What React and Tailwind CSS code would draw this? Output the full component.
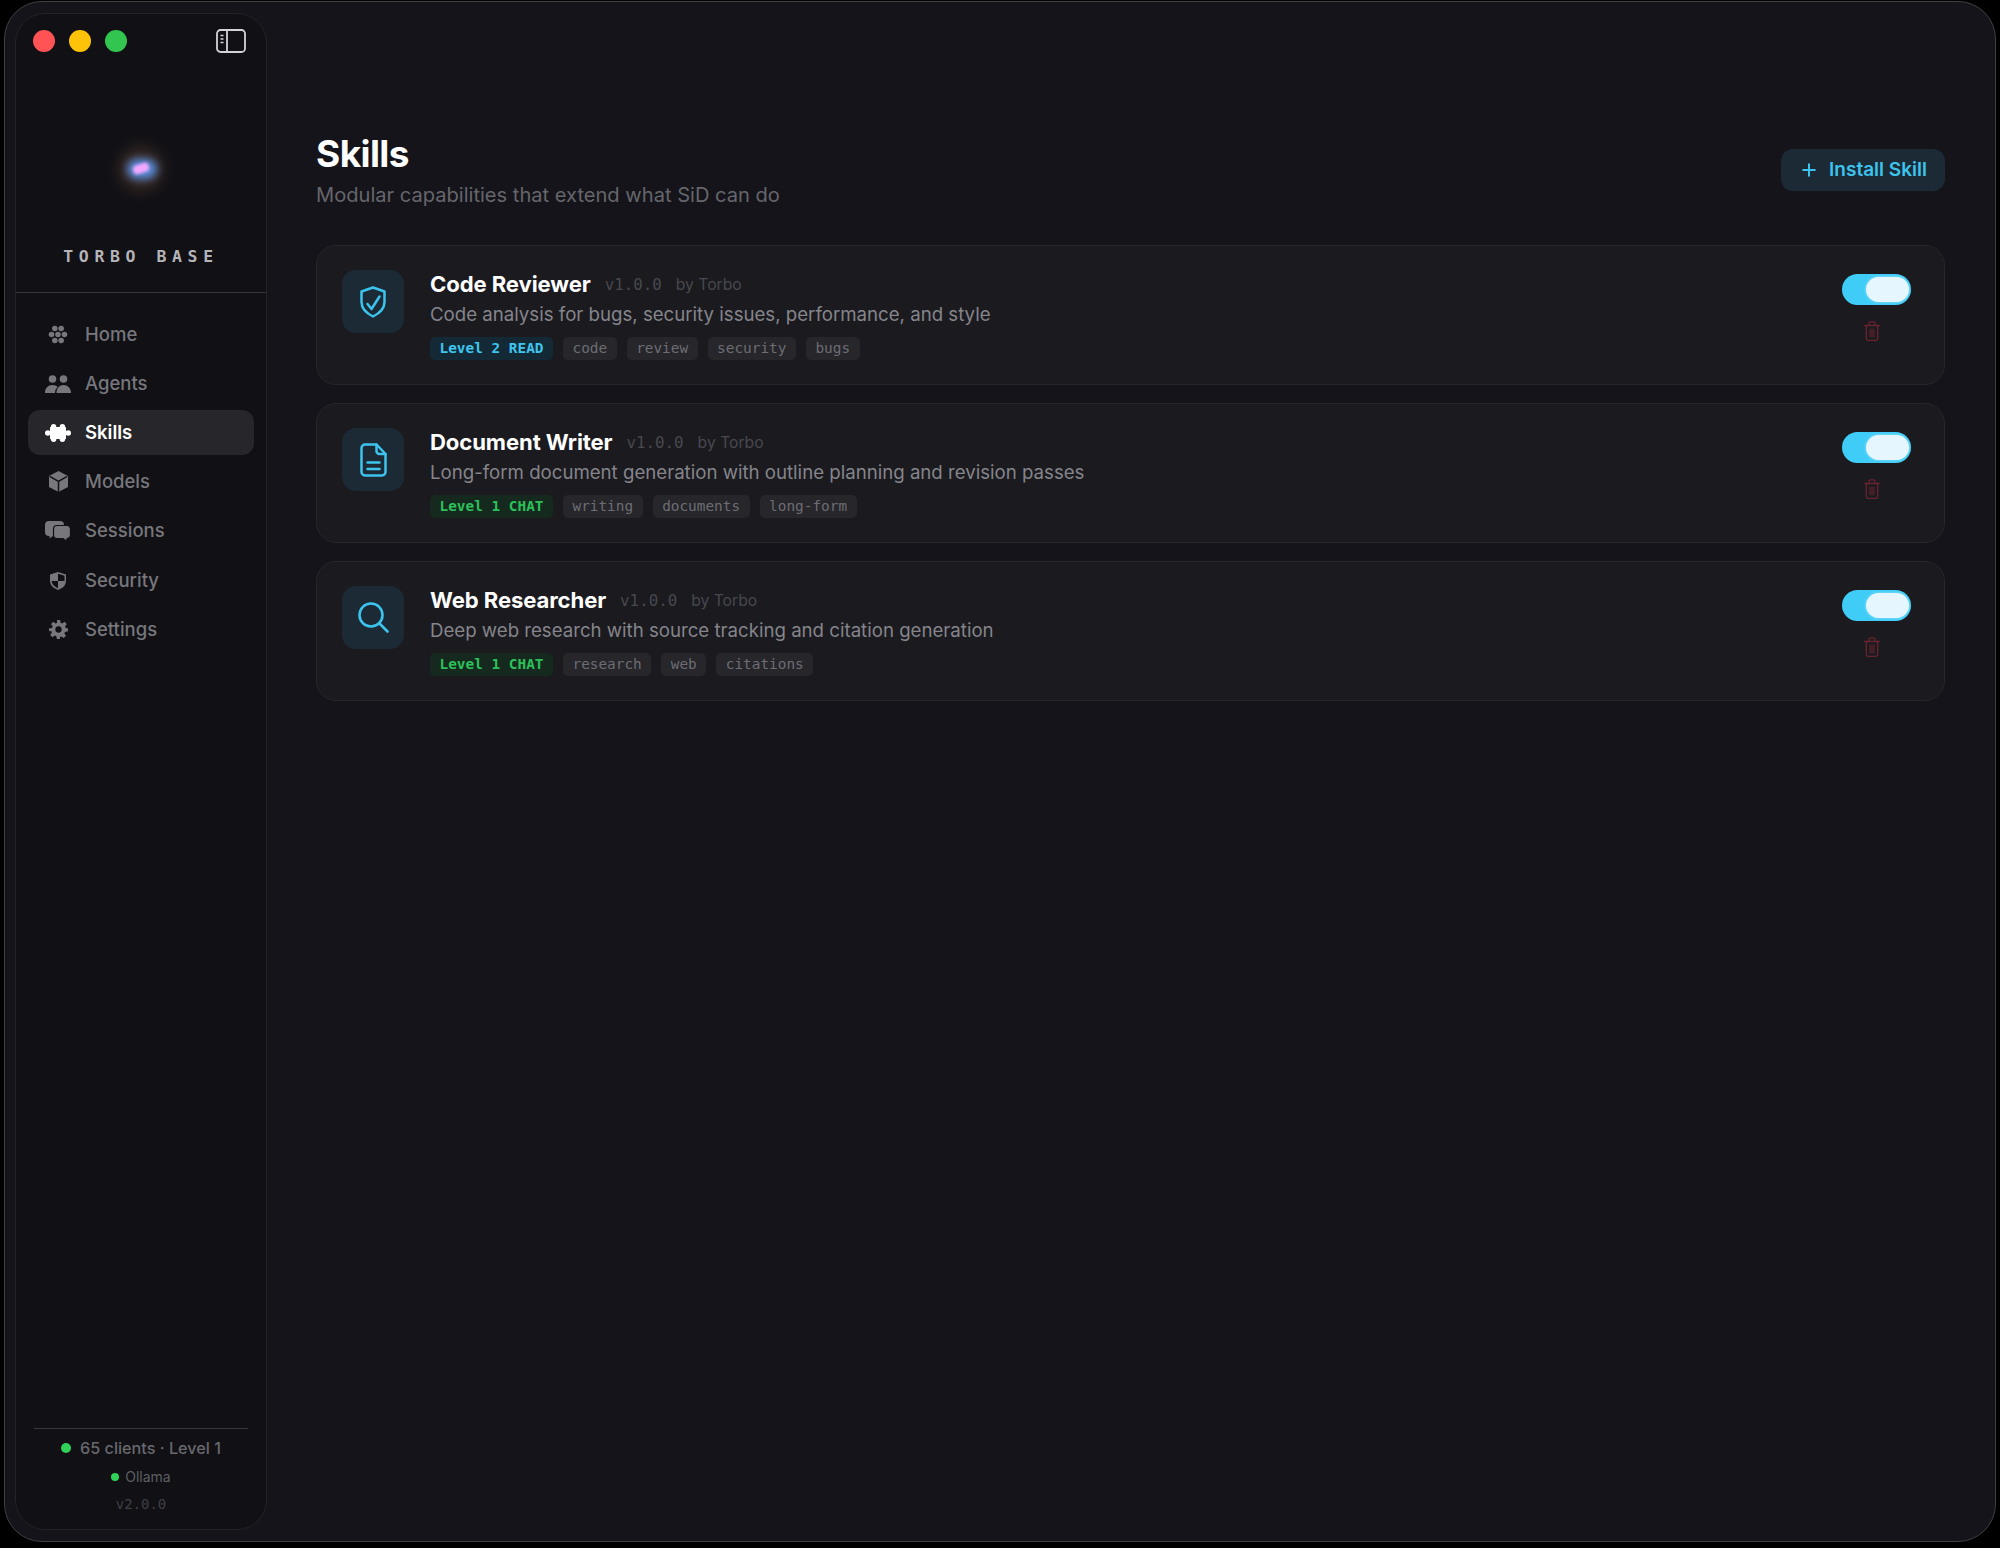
import React from "react";
import { Plus } from "lucide-react";

const HomeIcon = ({ className }) => (
  <svg viewBox="0 0 24 24" className={className} fill="currentColor">
    <circle cx="8" cy="4.5" r="3.5" /><circle cx="16" cy="4.5" r="3.5" />
    <circle cx="3.8" cy="12" r="3.5" /><circle cx="12" cy="12" r="3.5" /><circle cx="20.2" cy="12" r="3.5" />
    <circle cx="8" cy="19.5" r="3.5" /><circle cx="16" cy="19.5" r="3.5" />
  </svg>
);
const AgentsIcon = ({ className }) => (
  <svg viewBox="0 0 26 18" className={className} fill="currentColor">
    <circle cx="7.5" cy="4" r="3.8" /><circle cx="18.5" cy="4" r="3.8" />
    <path d="M0 18c0-5 3-8 7.5-8 2.2 0 4 .8 5.3 2.1C11 13.6 10 15.6 10 18H0z" />
    <path d="M11.5 18c0-5 3-8 7-8s7.5 3 7.5 8H11.5z" />
  </svg>
);
const PuzzleIcon = ({ className }) => (
  <svg viewBox="0 0 26 18" className={className} fill="currentColor">
    <rect x="5" y="3" width="16" height="12" rx="0.5" />
    <circle cx="8.6" cy="2.7" r="2.7" /><circle cx="17.4" cy="2.7" r="2.7" />
    <circle cx="8.6" cy="15.3" r="2.7" /><circle cx="17.4" cy="15.3" r="2.7" />
    <circle cx="2.8" cy="9" r="2.8" /><circle cx="23.2" cy="9" r="2.8" />
  </svg>
);
const CubeIcon = ({ className }) => (
  <svg viewBox="0 0 19 21" className={className}>
    <path d="M9.5 0 19 5v11l-9.5 5L0 16V5z" fill="currentColor" />
    <path d="M.8 5.4 9.5 10.3l8.7-4.9M9.5 10.3V21" fill="none" stroke="#101015" strokeWidth="1.5" />
  </svg>
);
const SessionsIcon = ({ className }) => (
  <svg viewBox="0 0 26 21" className={className}>
    <path d="M4 0h11a4 4 0 0 1 4 4v7a4 4 0 0 1-4 4H8l-3.5 2.5V15H4a4 4 0 0 1-4-4V4a4 4 0 0 1 4-4z" fill="currentColor" />
    <path d="M12 4.5h10a3.5 3.5 0 0 1 3.5 3.5v6a3.5 3.5 0 0 1-3.5 3.5v3l-4-3h-6A3.5 3.5 0 0 1 8.5 14V8A3.5 3.5 0 0 1 12 4.5z" fill="currentColor" stroke="#101015" strokeWidth="1.2" />
  </svg>
);
const SecurityIcon = ({ className }) => (
  <svg viewBox="0 0 16 18" className={className}>
    <path d="M8 0l8 2.5V9c0 4.5-4 7.5-8 9-4-1.5-8-4.5-8-9V2.5z" fill="currentColor" />
    <path d="M8 1.8 14.5 3.7V9H8zM8 9H1.6C2 12.5 5 15 8 16.3z" fill="#101015" />
  </svg>
);
const GearIcon = ({ className }) => (
  <svg viewBox="0 0 24 24" className={className} fill="currentColor">
    <path fillRule="evenodd" d="M10 0h4l.7 3.5 1.9.8 3-2 2.8 2.8-2 3 .8 1.9L24 10.7v3.6l-3.8.7-.8 1.9 2 3-2.8 2.8-3-2-1.900.8L14 24h-4l-.7-3.5-1.9-.8-3 2-2.800-2.800 2-3-.8-1.900L0 14.300v-3.600L3.800 10l.8-1.900-2-3 2.800-2.800 3 2 1.900-.8zM12 8a4 4 0 1 0 0 8 4 4 0 0 0 0-8z" />
  </svg>
);
const PanelIcon = () => (
  <svg viewBox="0 0 30 24" className="w-[30px] h-[24px]" fill="none" stroke="#d4d4d8" strokeWidth="1.8">
    <rect x="1" y="1" width="28" height="22" rx="3.5" />
    <path d="M11 1v22" />
    <path d="M4.5 6.5h3M4.5 10h3M4.5 13.5h3" strokeWidth="1.5" />
  </svg>
);
const ShieldIcon = () => (
  <svg viewBox="0 0 26 32" className="w-[26px] h-[32px]" fill="none" stroke="#3cc4ee" strokeWidth="2.5" strokeLinecap="round" strokeLinejoin="round">
    <path d="M13 1.5 24.5 5.5V16c0 7-5.5 11.5-11.5 14.500C7 27.500 1.500 23 1.500 16V5.500z" />
    <path d="M7.500 18l4 5 8-12.500" />
  </svg>
);
const DocIcon = () => (
  <svg viewBox="0 0 27 34" className="w-[27px] h-[34px]" fill="none" stroke="#3cc4ee" strokeWidth="2.5" strokeLinecap="round" strokeLinejoin="round">
    <path d="M5 1.5h11.5L25.5 11v18a3.5 3.5 0 0 1-3.5 3.5H5A3.5 3.5 0 0 1 1.5 29V5A3.5 3.5 0 0 1 5 1.5z" />
    <path d="M16.5 1.5V8a3 3 0 0 0 3 3h6" />
    <path d="M7.5 19.5h12M7.5 26h12" />
  </svg>
);
const SearchIcon = () => (
  <svg viewBox="0 0 31 31" className="w-[31px] h-[31px]" fill="none" stroke="#3cc4ee" strokeWidth="2.6" strokeLinecap="round">
    <circle cx="13" cy="13" r="11.5" />
    <path d="M21.5 21.5 29.5 29.5" />
  </svg>
);
const TrashIcon = () => (
  <svg viewBox="0 0 16 20" className="w-[16px] h-[20px] mr-[10px] mt-[16px]" fill="none" stroke="#6a2430" strokeWidth="1.3" strokeLinecap="round">
    <path d="M.8 4.5h14.4" />
    <path d="M5 4.5V2.3A1.5 1.5 0 0 1 6.5.8h3A1.5 1.5 0 0 1 11 2.3v2.2" />
    <path d="M2.3 4.5v13a1.8 1.8 0 0 0 1.8 1.8h7.800a1.800 1.800 0 0 0 1.800-1.800v-13" />
    <path d="M6 8v8M10 8v8M8 8v8" strokeWidth="1" />
  </svg>
);

const nav = [
  { label: "Home", Icon: HomeIcon, cls: "w-[20px] h-[19px]", h: "h-[45px]" },
  { label: "Agents", Icon: AgentsIcon, cls: "w-[26px] h-[18px]", h: "h-[45px]" },
  { label: "Skills", Icon: PuzzleIcon, cls: "w-[26px] h-[18px]", h: "h-[45px]", active: true },
  { label: "Models", Icon: CubeIcon, cls: "w-[19px] h-[21px]", h: "h-[45px]" },
  { label: "Sessions", Icon: SessionsIcon, cls: "w-[26px] h-[21px]", h: "h-[46px]" },
  { label: "Security", Icon: SecurityIcon, cls: "w-[16px] h-[18px]", h: "h-[45px]" },
  { label: "Settings", Icon: GearIcon, cls: "w-[19px] h-[19px]", h: "h-[45px]" },
];

const cyan = "bg-[#132a36] text-[#3fc6ef]";
const green = "bg-[#15291e] text-[#2cc05a]";

const skills = [
  { name: "Code Reviewer", desc: "Code analysis for bugs, security issues, performance, and style", level: "Level 2 READ", tone: cyan, tags: ["code", "review", "security", "bugs"], Icon: ShieldIcon },
  { name: "Document Writer", desc: "Long-form document generation with outline planning and revision passes", level: "Level 1 CHAT", tone: green, tags: ["writing", "documents", "long-form"], Icon: DocIcon },
  { name: "Web Researcher", desc: "Deep web research with source tracking and citation generation", level: "Level 1 CHAT", tone: green, tags: ["research", "web", "citations"], Icon: SearchIcon },
];

const mono = "font-['DejaVu_Sans_Mono',monospace]";

function SkillCard({ s }) {
  const { Icon } = s;
  return (
    <div className="h-[140px] rounded-[20px] border border-[#26262b] bg-[#1a1a1f] pl-[25px] pr-[33px] pt-[24px] flex">
      <div className="w-[62px] h-[63px] rounded-[14px] bg-[#1c2a35] flex items-center justify-center shrink-0">
        <Icon />
      </div>
      <div className="ml-[26px] flex-1 min-w-0">
        <div className="flex items-center h-[29px]">
          <span className="text-[22.1px] leading-[29px] font-bold text-white tracking-[-0.1px]">{s.name}</span>
          <span className={`${mono} ml-[14px] text-[15.8px] text-[#48484e]`}>v1.0.0</span>
          <span className="ml-[14px] text-[15.7px] text-[#48484e]">by Torbo</span>
        </div>
        <div className="mt-[1px] text-[18.65px] leading-[29px] text-[#85858b]">{s.desc}</div>
        <div className={`${mono} mt-[7.5px] flex gap-[10px] text-[14.4px] leading-[23px]`}>
          <span className={`h-[23px] px-[9.5px] rounded-[5px] font-bold ${s.tone}`}>{s.level}</span>
          {s.tags.map((t) => (
            <span key={t} className="h-[23px] px-[9.5px] rounded-[5px] bg-[#26262b] text-[#6d6d73]">{t}</span>
          ))}
        </div>
      </div>
      <div className="w-[69px] shrink-0 flex flex-col items-center">
        <div className="mt-[4px] w-[69px] h-[31px] rounded-full bg-[#3fcdf8] flex items-center justify-end pr-[2px]">
          <div className="w-[43px] h-[25px] rounded-full bg-[#e6f6ff] shadow-[0_0_3px_#a5e3fb]" />
        </div>
        <TrashIcon />
      </div>
    </div>
  );
}

export default function App() {
  return (
    <div className="w-[2000px] h-[1548px] bg-black pl-[4px] pt-[1px] font-['Inter',sans-serif] overflow-hidden">
      <div className="w-[1992px] h-[1541px] rounded-[38px] border border-[#3f3f44] bg-[#14141a] pl-[10px] py-[11px] flex overflow-hidden">
        <aside className="w-[252px] h-[1517px] shrink-0 rounded-[30px] border border-[#232328] bg-[#101015] flex flex-col">
          <div className="h-[279px] border-b border-[#38383d] shrink-0 flex flex-col">
            <div className="flex items-center pl-[17px] pr-[20px] pt-[15px]">
              <div className="flex gap-[14px]">
                <span className="w-[22px] h-[22px] rounded-full bg-[#ff5355]" />
                <span className="w-[22px] h-[22px] rounded-full bg-[#fec309]" />
                <span className="w-[22px] h-[22px] rounded-full bg-[#32c650]" />
              </div>
              <div className="ml-auto"><PanelIcon /></div>
            </div>
            <div className="relative mt-[86px] ml-[95px] w-[60px] h-[60px]">
              <div className="absolute left-[8px] top-[8px] w-[44px] h-[44px] rounded-full bg-[#7a523c] opacity-40 blur-[8px]" />
              <div className="absolute left-[16px] top-[20px] w-[30px] h-[20px] rounded-full bg-[#5a8fe0] blur-[4px]" />
              <div className="absolute left-[22px] top-[25px] w-[16px] h-[9px] rounded-[4px] bg-[#f3a8ff] -rotate-[18deg] blur-[1.5px]" />
            </div>
            <div className={`${mono} mt-[48px] text-center text-[16.5px] leading-[20px] font-bold tracking-[5.6px] text-[#b4b4b8] whitespace-pre`}>TORBO BASE</div>
          </div>
          <nav className="px-[12px] pt-[19px] flex flex-col gap-[4px]">
            {nav.map(({ label, Icon, cls, h, active }) => (
              <div key={label} className={`${h} rounded-[12px] flex items-center text-[18.5px] ${active ? "bg-[#26262b] text-white font-semibold" : "text-[#77777c] font-medium"}`}>
                <span className="w-[57px] pl-[3px] flex items-center justify-center shrink-0"><Icon className={cls} /></span>
                <span>{label}</span>
              </div>
            ))}
          </nav>
          <div className="mt-auto mx-[18px] border-t border-[#38383d] pb-[15px] pt-[9px] flex flex-col items-center">
            <div className="flex items-center gap-[9px] text-[16.2px] leading-[20px] font-medium text-[#68686d]">
              <span className="w-[10px] h-[10px] rounded-full bg-[#2fd158]" />65 clients · Level 1
            </div>
            <div className="mt-[9px] flex items-center gap-[6px] text-[14px] leading-[20px] text-[#5f5f64]">
              <span className="w-[8px] h-[8px] rounded-full bg-[#2fd158]" />Ollama
            </div>
            <div className={`${mono} mt-[7px] text-[14px] leading-[20px] text-[#404045]`}>v2.0.0</div>
          </div>
        </aside>
        <main className="flex-1 pl-[49px] pr-[50px] pt-[118px]">
          <div className="flex items-start justify-between h-[114px]">
            <div>
              <h1 className="text-[37px] leading-[46px] font-bold text-white tracking-[-0.6px]">Skills</h1>
              <p className="mt-[3px] text-[20.1px] leading-[30px] text-[#66666c]">Modular capabilities that extend what SiD can do</p>
            </div>
            <button className="mt-[18px] h-[42px] w-[164px] rounded-[12px] bg-[#1c2a35] text-[#3cc4ee] flex items-center justify-center gap-[10px] text-[19px] font-semibold">
              <Plus className="w-[20px] h-[20px]" strokeWidth={2.4} />Install Skill
            </button>
          </div>
          <div className="flex flex-col gap-[18px]">
            {skills.map((s) => <SkillCard key={s.name} s={s} />)}
          </div>
        </main>
      </div>
    </div>
  );
}
